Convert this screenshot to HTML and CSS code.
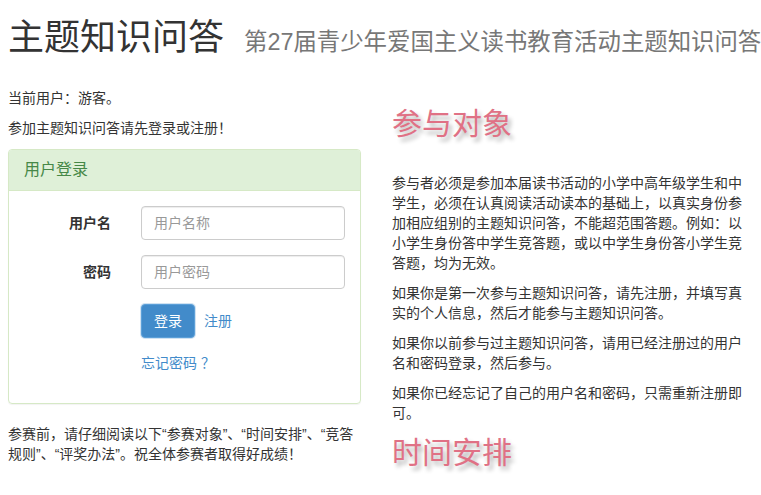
FILE: index.html
```html
<!DOCTYPE html>
<html lang="zh-CN">
<head>
<meta charset="utf-8">
<title>主题知识问答</title>
<link rel="stylesheet" href="styles.css">
</head>
<body>
<div class="page">
  <h1 class="title">主题知识问答<small class="subtitle">第27届青少年爱国主义读书教育活动主题知识问答</small></h1>
  <div class="cols">
    <div class="left">
      <p>当前用户：游客。</p>
      <p>参加主题知识问答请先登录或注册！</p>
      <div class="panel">
        <div class="panel-heading"><h3 class="panel-title">用户登录</h3></div>
        <div class="panel-body">
          <form class="form">
            <div class="form-group">
              <label class="label-col">用户名</label>
              <div class="field-col"><input class="form-control" type="text" placeholder="用户名称"></div>
            </div>
            <div class="form-group">
              <label class="label-col">密码</label>
              <div class="field-col"><input class="form-control" type="password" placeholder="用户密码"></div>
            </div>
            <div class="form-group">
              <div class="field-col offset"><button class="btn" type="button">登录</button><a class="link reg" href="#">注册</a></div>
            </div>
            <div class="form-group">
              <div class="field-col offset line"><a class="link" href="#">忘记密码 ？</a></div>
            </div>
          </form>
        </div>
      </div>
      <p>参赛前，请仔细阅读以下“参赛对象”、“时间安排”、“竞答规则”、“评奖办法”。祝全体参赛者取得好成绩！</p>
    </div>
    <div class="right">
      <div class="sec-title first">参与对象</div>
      <p>参与者必须是参加本届读书活动的小学中高年级学生和中学生，必须在认真阅读活动读本的基础上，以真实身份参加相应组别的主题知识问答，不能超范围答题。例如：以小学生身份答中学生竞答题，或以中学生身份答小学生竞答题，均为无效。</p>
      <p>如果你是第一次参与主题知识问答，请先注册，并填写真实的个人信息，然后才能参与主题知识问答。</p>
      <p>如果你以前参与过主题知识问答，请用已经注册过的用户名和密码登录，然后参与。</p>
      <p>如果你已经忘记了自己的用户名和密码，只需重新注册即可。</p>
      <div class="sec-title">时间安排</div>
    </div>
  </div>
</div>
</body>
</html>
```

FILE: styles.css
```css
html, body {
  margin: 0;
  padding: 0;
  background: #fff;
}
body {
  font-family: "Liberation Sans", "Noto Sans CJK SC", sans-serif;
  font-size: 14px;
  line-height: 20px;
  color: #333;
  overflow: hidden;
}
.page {
  padding-left: 8px;
}
.title {
  margin: 18px 0 30px;
  height: 40px;
  line-height: 40px;
  font-size: 36px;
  font-weight: 400;
  color: #333;
  white-space: nowrap;
  overflow: hidden;
}
.subtitle {
  margin-left: 20px;
  font-size: 23.4px;
  color: #777;
  font-weight: 400;
}
.cols {
  display: flex;
  gap: 31px;
}
.left, .right {
  width: 353px;
  flex: none;
}
p {
  margin: 0 0 10px;
}
.panel {
  margin: 11px 0 20px;
  border: 1px solid #d6e9c6;
  border-radius: 4px;
  box-shadow: 0 1px 1px rgba(0,0,0,.05);
}
.panel-heading {
  background: #dff0d8;
  border-bottom: 1px solid #d6e9c6;
  padding: 10px 15px;
  border-radius: 3px 3px 0 0;
}
.panel-title {
  margin: 0;
  font-size: 16px;
  line-height: 20px;
  font-weight: 400;
  color: #468847;
}
.panel-body {
  padding: 15px;
}
.form {
  margin: 0;
}
.form-group {
  display: flex;
  margin: 0 -15px 15px;
}
.label-col {
  width: 117px;
  box-sizing: border-box;
  padding: 7px 15px 0;
  text-align: right;
  font-weight: 700;
  flex: none;
}
.field-col {
  flex: 1;
  padding: 0 15px;
  display: flex;
  align-items: center;
}
.field-col.offset {
  margin-left: 117px;
}
.form-control {
  width: 100%;
  height: 34px;
  box-sizing: border-box;
  padding: 6px 12px;
  font: inherit;
  color: #555;
  border: 1px solid #ccc;
  border-radius: 4px;
  box-shadow: inset 0 1px 1px rgba(0,0,0,.075);
  background: #fff;
}
.form-control::placeholder {
  color: #999;
}
.btn {
  height: 34px;
  padding: 6px 12px;
  font: inherit;
  color: #fff;
  background: #428bca;
  border: 1px solid #5b9fd8;
  border-radius: 4px;
  box-shadow: 0 0 0 1px rgba(66,139,202,.25);
}
.link {
  color: #428bca;
  text-decoration: none;
}
.reg {
  margin-left: 9px;
}
.sec-title {
  font-size: 30px;
  line-height: 40px;
  height: 40px;
  color: #e07185;
  text-shadow: 3px 4px 4px rgba(0,0,0,.3);
  margin: 3px 0 0;
}
.sec-title.first {
  margin: 16px 0 29px;
}
```
